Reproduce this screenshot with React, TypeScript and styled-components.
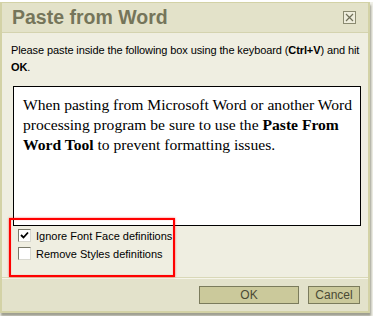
import styled, { createGlobalStyle } from "styled-components";

const GlobalStyle = createGlobalStyle`
  html, body {
    margin: 0;
    padding: 0;
    background: #f4f4ee;
  }
  body {
    width: 373px;
    height: 316px;
    overflow: hidden;
  }
`;

const Page = styled.div`
  padding-top: 2px;
  height: 316px;
  box-sizing: border-box;
  background: linear-gradient(#ffffff 0 2px, #f0f0e8 2px);
`;

const Dialog = styled.div`
  width: 370px;
  height: 311px;
  box-sizing: border-box;
  border: 2px solid #d3d2a6;
  border-top-width: 1px;
  background: #efeee1;
  display: flex;
  flex-direction: column;
  box-shadow: 1px 3px 2px rgba(60, 60, 40, 0.45);
`;

const TitleBar = styled.div`
  height: 29px;
  flex-shrink: 0;
  display: flex;
  align-items: center;
  justify-content: space-between;
  padding: 0 12px 0 10px;
  background: #e3e2c9;
  border-bottom: 1px solid #d4d3af;
`;

const Title = styled.h1`
  margin: 0;
  font-family: "Liberation Sans", Arial, sans-serif;
  font-size: 19.5px;
  font-weight: bold;
  color: #75755a;
`;

const CloseButton = styled.button`
  width: 13px;
  height: 13px;
  padding: 0;
  border: 1px solid #8a8a70;
  background: #eeeddc;
  display: grid;
  place-items: center;
  cursor: pointer;
`;

const Body = styled.div`
  flex: 1;
  padding: 9px 8px 0 8px;
  display: flex;
  flex-direction: column;
  border-bottom: 1px solid #d9d8b8;
`;

const Intro = styled.p`
  margin: 0 0 0 1px;
  font-family: "Liberation Sans", Arial, sans-serif;
  font-size: 11px;
  line-height: 17px;
  letter-spacing: -0.1px;
  color: #000;
  b {
    font-weight: bold;
  }
`;

const PasteBox = styled.div`
  margin: 10px 0 0 3px;
  width: 348px;
  height: 140px;
  box-sizing: border-box;
  background: #fff;
  border: 1px solid #000;
  padding: 8px 4px 8px 9px;
  font-family: "Liberation Serif", "Times New Roman", serif;
  font-size: 15.6px;
  line-height: 20px;
  color: #000;
`;

const Options = styled.div`
  position: relative;
  margin-top: 1px;
  padding: 2px 0 0 8px;
  display: flex;
  flex-direction: column;
  gap: 5px;
`;

const Highlight = styled.div`
  position: absolute;
  left: -1px;
  top: -9px;
  width: 166px;
  height: 59px;
  box-sizing: border-box;
  border: 2px solid #ff0000;
  box-shadow: 0 0 2px rgba(255, 0, 0, 0.6), inset 0 0 1px rgba(255, 0, 0, 0.5);
  pointer-events: none;
`;

const OptionRow = styled.label`
  display: flex;
  align-items: center;
  gap: 5px;
  height: 13px;
  font-family: "Liberation Sans", Arial, sans-serif;
  font-size: 11px;
  color: #000;
`;

const Check = styled.span<{ $checked?: boolean }>`
  width: 13px;
  height: 13px;
  box-sizing: border-box;
  border: 1px solid #7a7a6a;
  border-right-color: #d8d8d0;
  border-bottom-color: #d8d8d0;
  background: #fff;
  display: grid;
  place-items: center;
`;

const Footer = styled.div`
  height: 32px;
  flex-shrink: 0;
  background: #e3e2cb;
  display: flex;
  align-items: center;
  justify-content: flex-end;
  gap: 9px;
  padding: 0 8px 0 0;
  border-top: 1px solid #f6f5ea;
`;

const Button = styled.button<{ $width: number }>`
  width: ${(p) => p.$width}px;
  height: 18px;
  padding: 0;
  background: #cbc99b;
  border: 1px solid #7b7b5c;
  font-family: "Liberation Sans", Arial, sans-serif;
  font-size: 12px;
  color: #4a4a35;
  cursor: pointer;
`;

const App = () => {
  return (
    <>
      <GlobalStyle />
      <Page>
        <Dialog>
          <TitleBar>
            <Title>Paste from Word</Title>
            <CloseButton aria-label="Close">
              <svg width="9" height="9" viewBox="0 0 9 9">
                <path d="M1 1 L8 8 M8 1 L1 8" stroke="#6f6f58" strokeWidth="1.2" />
              </svg>
            </CloseButton>
          </TitleBar>
          <Body>
            <Intro>
              Please paste inside the following box using the keyboard (<b>Ctrl+V</b>) and hit{" "}
              <b>OK</b>.
            </Intro>
            <PasteBox>
              When pasting from Microsoft Word or another Word processing program be sure to use
              the <b>Paste From Word Tool</b> to prevent formatting issues.
            </PasteBox>
            <Options>
              <Highlight />
              <OptionRow>
                <Check $checked>
                  <svg width="9" height="9" viewBox="0 0 9 9">
                    <path d="M1 4 L3.5 6.5 L8 1.5" stroke="#000" strokeWidth="1.8" fill="none" />
                  </svg>
                </Check>
                Ignore Font Face definitions
              </OptionRow>
              <OptionRow>
                <Check />
                Remove Styles definitions
              </OptionRow>
            </Options>
          </Body>
          <Footer>
            <Button $width={100}>OK</Button>
            <Button $width={52}>Cancel</Button>
          </Footer>
        </Dialog>
      </Page>
    </>
  );
};

export default App;
